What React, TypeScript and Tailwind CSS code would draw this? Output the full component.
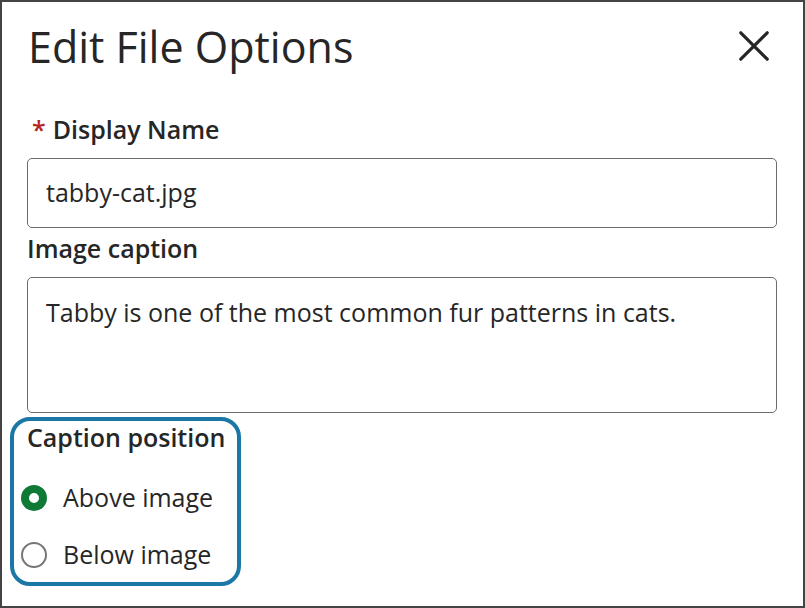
import React from "react";

export default function App() {
  return (
    <div
      className="w-[805px] h-[608px] bg-white border-2 border-[#444] overflow-hidden text-[#262626]"
      style={{ fontFamily: '"Open Sans", "Noto Sans", sans-serif' }}
    >
      <div className="flex items-start justify-between pl-[26px] pr-[34px] pt-[17px]">
        <h1 className="text-[43px] leading-[56px] font-normal">Edit File Options</h1>
        <button className="mt-[12px] w-[30px] h-[30px] flex items-center justify-center">
          <svg width="30" height="30" viewBox="0 0 30 30" fill="none" stroke="#262626" strokeWidth="3.2" strokeLinecap="round">
            <path d="M1.8 1.8 L28.2 28.2 M28.2 1.8 L1.8 28.2" />
          </svg>
        </button>
      </div>
      <div className="pl-[25px] pr-[26px] mt-[39px]">
        <div className="text-[25px] leading-[30px] font-semibold pl-[5px]">
          <span className="text-[#b3261e] mr-[7px]">*</span>Display Name
        </div>
        <div className="mt-[14px] h-[70px] border border-[#6b6b6b] rounded-[5px] flex items-center pl-[18px] text-[25px]">
          tabby-cat.jpg
        </div>
        <div className="mt-[3px] text-[25px] leading-[34px] font-semibold">Image caption</div>
        <div className="mt-[12px] h-[136px] border border-[#6b6b6b] rounded-[5px] pl-[18px] pt-[19px] text-[25px] leading-[30px]">
          Tabby is one of the most common fur patterns in cats.
        </div>
      </div>
      <div className="ml-[8px] mt-[4px] w-[231px] h-[169px] border-[4px] border-[#1b77a6] rounded-[20px] pl-[7px] pt-[1px]">
        <div className="text-[25px] leading-[30px] font-semibold pl-[6px]">Caption position</div>
        <div className="mt-[31px] flex items-center gap-[16px] h-[30px]">
          <span className="w-[26px] h-[26px] rounded-full border-[8px] border-[#0f7a35] bg-white shrink-0" />
          <span className="text-[25px]">Above image</span>
        </div>
        <div className="mt-[27px] flex items-center gap-[16px] h-[30px]">
          <span className="w-[26px] h-[26px] rounded-full border-[2px] border-[#767676] bg-white shrink-0" />
          <span className="text-[25px]">Below image</span>
        </div>
      </div>
    </div>
  );
}
